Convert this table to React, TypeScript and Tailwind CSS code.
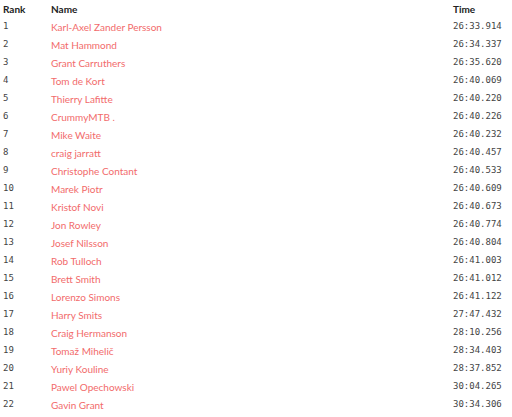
import React from "react";

const rows: [string, string][] = [
  ["Karl-Axel Zander Persson", "26:33.914"],
  ["Mat Hammond", "26:34.337"],
  ["Grant Carruthers", "26:35.620"],
  ["Tom de Kort", "26:40.069"],
  ["Thierry Lafitte", "26:40.220"],
  ["CrummyMTB .", "26:40.226"],
  ["Mike Waite", "26:40.232"],
  ["craig jarratt", "26:40.457"],
  ["Christophe Contant", "26:40.533"],
  ["Marek Piotr", "26:40.609"],
  ["Kristof Novi", "26:40.673"],
  ["Jon Rowley", "26:40.774"],
  ["Josef Nilsson", "26:40.804"],
  ["Rob Tulloch", "26:41.003"],
  ["Brett Smith", "26:41.012"],
  ["Lorenzo Simons", "26:41.122"],
  ["Harry Smits", "27:47.432"],
  ["Craig Hermanson", "28:10.256"],
  ["Tomaž Mihelič", "28:34.403"],
  ["Yuriy Kouline", "28:37.852"],
  ["Pawel Opechowski", "30:04.265"],
  ["Gavin Grant", "30:34.306"],
];

export default function App() {
  return (
    <div className="w-[512px] h-[417px] bg-white overflow-hidden font-['Lato',sans-serif] text-[10px]">
      <div className="flex h-[18px] items-center font-bold text-[#222]">
        <div className="w-[51px] pl-[3px]">Rank</div>
        <div className="flex-1">Name</div>
        <div className="w-[59px]">Time</div>
      </div>
      {rows.map((r, i) => (
        <div key={i} className="flex h-[18px] items-center">
          <div className="w-[51px] pl-[3px] font-['DejaVu_Sans_Mono',monospace] text-[9px] text-[#444]">{i + 1}</div>
          <div className="flex-1 text-[#f26b6b]">{r[0]}</div>
          <div className="w-[59px] font-['DejaVu_Sans_Mono',monospace] text-[9px] text-[#444]">{r[1]}</div>
        </div>
      ))}
    </div>
  );
}
